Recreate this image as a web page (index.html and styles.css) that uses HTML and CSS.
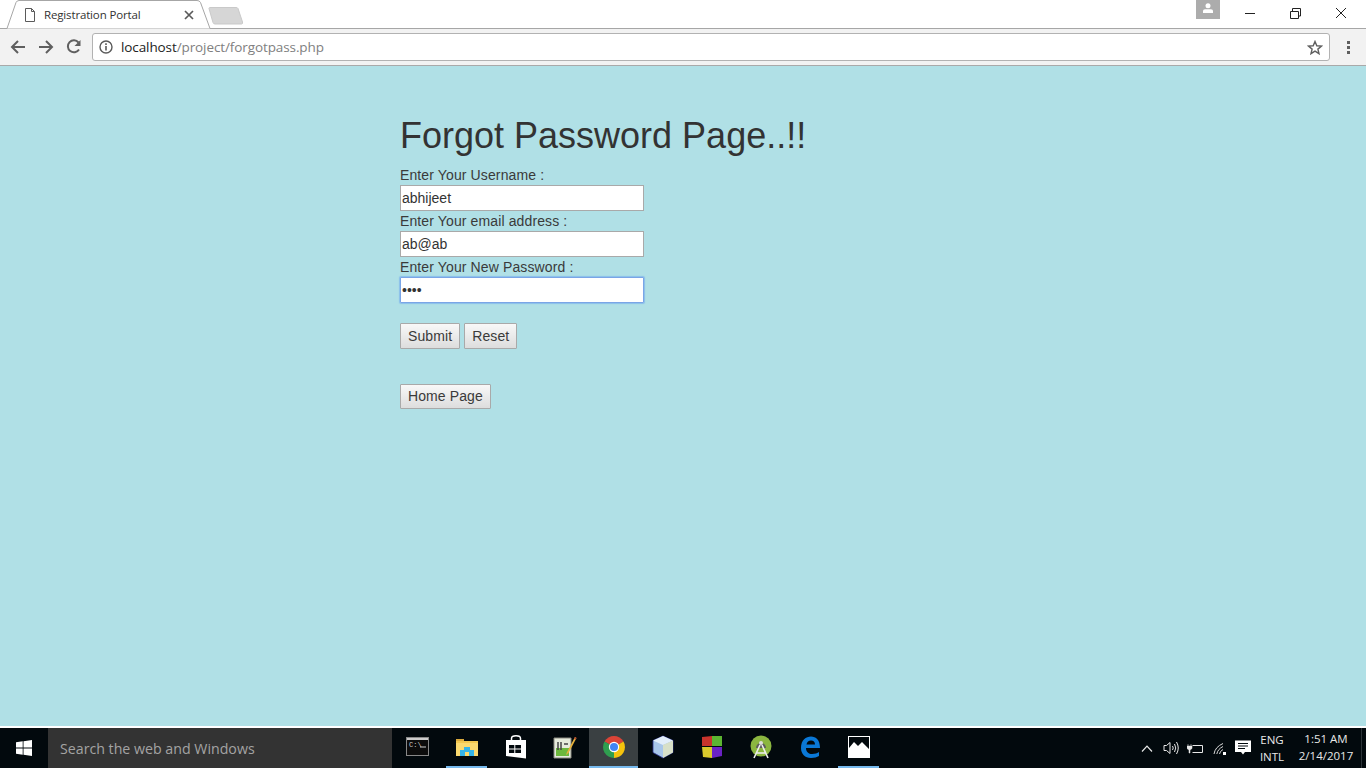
FILE: index.html
```html
<!DOCTYPE html>
<html>

<head>
    <title>Registration Portal</title>
    <link rel="stylesheet" href="styles.css">
</head>

<body>

    <div class="tabstrip">
        <div class="tab">
            <svg class="tab-shape" width="212" height="29" viewBox="0 0 212 29">
                <path d="M0 28.500H7L16 2.500Q17 .5 19 .5H197Q199.500 .5 200.500 2.500L210 28.500H212" fill="#fff" stroke="#a6a6a6"/>
            </svg>
            <svg class="tab-icon" width="12" height="14" viewBox="0 0 12 14">
                <path d="M1.500 .5H7.500L10.500 3.500V13.500H1.500ZM7.500 .5V3.500H10.500" fill="none" stroke="#5a5a5a"/>
            </svg>
            <span class="tab-title">Registration Portal</span>
            <svg class="tab-close" width="10" height="10" viewBox="0 0 10 10">
                <path d="M1 1L9 9M9 1L1 9" stroke="#5a5a5a" stroke-width="1.700"/>
            </svg>
        </div>
        <svg class="new-tab" width="36" height="18" viewBox="0 0 36 18">
            <path d="M1 1.500Q1 .5 2 .5H28Q29.500 .5 30 1.500L34.500 15Q35 17 33.500 17H7Q5.500 17 5 15.500Z" fill="#d6d6d6" stroke="#c9c9c9"/>
        </svg>
        <div class="window-controls">
            <div class="user-badge">
                <svg width="12" height="10" viewBox="0 0 12 10">
                    <circle cx="6" cy="2.700" r="2.500" fill="#fff"/>
                    <path d="M1 10V8Q1 6.500 3 6.200H9Q11 6.500 11 8V10Z" fill="#fff"/>
                </svg>
            </div>
            <svg class="win-btn" width="46" height="28" viewBox="0 0 46 28">
                <path d="M19 13.500H29" stroke="#222" fill="none"/>
            </svg>
            <svg class="win-btn" width="46" height="28" viewBox="0 0 46 28">
                <path d="M18.500 11.500H26.500V18.500H18.500ZM20.500 11V8.500H28.500V16H27" stroke="#222" fill="none"/>
            </svg>
            <svg class="win-btn" width="46" height="28" viewBox="0 0 46 28">
                <path d="M18 8L28 18M28 8L18 18" stroke="#222" fill="none"/>
            </svg>
        </div>
    </div>

    <div class="toolbar">
        <svg class="nav-icon" width="16" height="14" viewBox="0 0 16 14">
            <path d="M15 7H2M8 1L2 7L8 13" fill="none" stroke="#5f5f5f" stroke-width="2"/>
        </svg>
        <svg class="nav-icon" width="16" height="14" viewBox="0 0 16 14">
            <path d="M1 7H14M8 1L14 7L8 13" fill="none" stroke="#5f5f5f" stroke-width="2"/>
        </svg>
        <svg class="nav-icon" width="16" height="16" viewBox="0 0 16 16">
            <path d="M13 10.500A6 6 0 1 1 12.500 3.500" fill="none" stroke="#5f5f5f" stroke-width="2"/>
            <path d="M14.500 1V7H8.500Z" fill="#5f5f5f"/>
        </svg>
        <div class="omnibox">
            <svg width="14" height="14" viewBox="0 0 14 14">
                <circle cx="7" cy="7" r="6" fill="none" stroke="#5a5a5a" stroke-width="1.400"/>
                <path d="M7 6V10.500M7 3.300V5" stroke="#5a5a5a" stroke-width="1.600"/>
            </svg>
            <span class="url"><span class="url-host">localhost</span>/project/forgotpass.php</span>
            <svg class="star" width="16" height="15" viewBox="0 0 16 15">
                <path d="M8 1.500L9.800 5.800L14.500 6.100L10.900 9.100L12 13.700L8 11.200L4 13.700L5.100 9.100L1.500 6.100L6.200 5.800Z" fill="none" stroke="#5f5f5f" stroke-width="1.400"/>
            </svg>
        </div>
        <div class="menu-dots"><span></span><span></span><span></span></div>
    </div>

    <div class="page">
        <h1>Forgot Password Page..!!</h1>

        <form>
            <label for="username">Enter Your Username :</label>
            <input type="text" id="username" value="abhijeet">

            <label for="email">Enter Your email address :</label>
            <input type="text" id="email" value="ab@ab">

            <label for="newpass">Enter Your New Password :</label>
            <input type="password" id="newpass" class="focused" value="abcd">

            <div class="form-buttons">
                <button type="button">Submit</button>
                <button type="button">Reset</button>
            </div>
        </form>

        <button type="button" class="home-btn">Home Page</button>
    </div>

    <div class="taskbar">
        <div class="start">
            <svg width="16" height="16" viewBox="0 0 16 16">
                <path d="M0 2.300L6.700 1.300V7.500H0ZM7.500 1.200L16 0V7.500H7.500ZM0 8.400H6.700V14.700L0 13.700ZM7.500 8.400H16V16L7.500 14.800Z" fill="#fff"/>
            </svg>
        </div>
        <div class="search">Search the web and Windows</div>

        <div class="task-icons">
            <div class="task-item">
                <svg width="24" height="20" viewBox="0 0 24 20">
                    <rect x=".5" y=".5" width="22" height="18" fill="#0c0c0c" stroke="#888"/>
                    <rect x="1" y="1" width="21" height="2" fill="#ccc"/>
                    <text x="3" y="10" class="cmd-text">C:\</text>
                    <path d="M14 10H20" stroke="#ccc" fill="none"/>
                </svg>
            </div>
            <div class="task-item open">
                <svg width="22" height="20" viewBox="0 0 22 20">
                    <path d="M0 2H8V4H0Z" fill="#d9a93c"/>
                    <path d="M0 4H22V19H0Z" fill="#fbd96f"/>
                    <path d="M0 4H22V6H0Z" fill="#f3c850"/>
                    <path d="M4 19V13H8V10H14V13H18V19H13V15H9V19Z" fill="#35b4e8"/>
                </svg>
            </div>
            <div class="task-item">
                <svg width="22" height="24" viewBox="0 0 22 24">
                    <path d="M6.500 6V3.500Q6.500 .8 11 .8Q15.500 .8 15.500 3.500V6" fill="none" stroke="#fff" stroke-width="1.500"/>
                    <path d="M1 5H21V23.500L1 21Z" fill="#fff"/>
                    <path d="M4 10H9.300V13.500H4ZM10.300 10H16V13.500H10.300ZM4 14.500H9.300V18H4ZM10.300 14.500H16V18H10.300Z" fill="#02090d"/>
                </svg>
            </div>
            <div class="task-item">
                <svg width="24" height="24" viewBox="0 0 24 24">
                    <path d="M1 3H18V23H1Z" fill="#e6ebdc" stroke="#8a8a80"/>
                    <path d="M3 13H16V21H3Z" fill="#6cb83c"/>
                    <path d="M5 7V15M8 7V15M11 9H15" stroke="#444" stroke-width="1.500"/>
                    <path d="M22 2L14 17L13 20L15.500 18L23.500 3Z" fill="#e6b23c"/>
                    <path d="M22 2L23.500 3L22.700 4.500L21 3.700Z" fill="#b5432f"/>
                </svg>
            </div>
            <div class="task-item active">
                <svg width="22" height="22" viewBox="0 0 22 22">
                    <path d="M11 11L1.500 5.500A11 11 0 0 1 20.500 5.500Z" fill="#db4437"/>
                    <path d="M11 11L20.500 5.500A11 11 0 0 1 11 22Z" fill="#f4c20d"/>
                    <path d="M11 11L11 22A11 11 0 0 1 1.500 5.500Z" fill="#2f9e4f"/>
                    <circle cx="11" cy="11" r="5.200" fill="#fff"/>
                    <circle cx="11" cy="11" r="4" fill="#4285f4"/>
                </svg>
            </div>
            <div class="task-item">
                <svg width="22" height="24" viewBox="0 0 22 24">
                    <path d="M11 1L21 5.500V17.500L11 23L1 17.500V5.500Z" fill="#a9c7ea" stroke="#2f3590" stroke-width=".8"/>
                    <path d="M11 1L21 5.500L11 10L1 5.500Z" fill="#e2eefa"/>
                    <path d="M11 10L21 5.500V17.500L11 23Z" fill="#d8e0c8"/>
                </svg>
            </div>
            <div class="task-item">
                <svg width="22" height="24" viewBox="0 0 22 24">
                    <path d="M1 2L11 1V11H1Z" fill="#c8342c"/>
                    <path d="M11 1L21 1V11H11Z" fill="#5cb531"/>
                    <path d="M1 12H11V23L2 22Z" fill="#d9c92c"/>
                    <path d="M11 12H21V21L11 23Z" fill="#6a22c4"/>
                </svg>
            </div>
            <div class="task-item">
                <svg width="24" height="24" viewBox="0 0 24 24">
                    <circle cx="12" cy="11" r="10.500" fill="#8bb640"/>
                    <path d="M7 13A5 5 0 0 1 17 13Z" fill="#5c5c5c"/>
                    <circle cx="12" cy="8" r="2" fill="#ddd"/>
                    <path d="M11 10L5 23M13 10L19 23M7 18H17" stroke="#eee" stroke-width="1.600" fill="none"/>
                </svg>
            </div>
            <div class="task-item">
                <svg width="20" height="22" viewBox="0 0 20 22">
                    <path d="M1 12C1 4 6 .5 11 .5C16 .5 20 4 20 12H6C6 16 9 18 12 18C15 18 17.500 17 19 16V20C17 21 14.500 22 11 22C5 22 1 18 1 12ZM6.500 8.500H15C15 6 13.500 4.500 11 4.500C8.500 4.500 7 6 6.500 8.500Z" fill="#0a78d7"/>
                </svg>
            </div>
            <div class="task-item open">
                <svg width="22" height="22" viewBox="0 0 22 22">
                    <rect x=".5" y=".5" width="21" height="21" fill="#02090d" stroke="#fff"/>
                    <path d="M1 20V12L6 6L10 10L14 6L21 13V21H1Z" fill="#fff"/>
                </svg>
            </div>
        </div>

        <div class="tray">
            <svg class="tray-chevron" width="12" height="7" viewBox="0 0 12 7">
                <path d="M1 6.500L6 1.200L11 6.500" fill="none" stroke="#e8e8e8" stroke-width="1.200"/>
            </svg>
            <svg class="tray-sound" width="17" height="14" viewBox="0 0 17 14">
                <path d="M1 4.500H3.500L7 1.500V12.500L3.500 9.500H1Z" fill="none" stroke="#e8e8e8"/>
                <path d="M9.500 5Q11 7 9.500 9M11.500 3Q14 7 11.500 11M13.500 1Q17 7 13.500 13" fill="none" stroke="#e8e8e8"/>
            </svg>
            <svg class="tray-power" width="16" height="11" viewBox="0 0 16 11">
                <path d="M5.500 2.500H15.500V9.500H5.500" fill="none" stroke="#e8e8e8"/>
                <path d="M1 1V3M4 1V3M0 3H5V5.500L3 7V10H2V7L0 5.500Z" fill="#e8e8e8" stroke="#e8e8e8" stroke-width=".5"/>
            </svg>
            <svg class="tray-wifi" width="14" height="13" viewBox="0 0 14 13">
                <path d="M1 12Q2 5 10 1.500M3.800 12Q4.800 7 10 4.500M6.500 12Q7 9 10 7.500" fill="none" stroke="#d8d8d8"/>
                <rect x="10" y="10" width="3" height="3" fill="#fff"/>
            </svg>
            <svg class="tray-message" width="16" height="16" viewBox="0 0 16 16">
                <path d="M0 .5H16V12H10L8 14.500L6 12H0Z" fill="#fff"/>
                <path d="M3 3.500H13M3 6H13M3 8.500H10" stroke="#02090d"/>
            </svg>
            <div class="lang">ENG<br>INTL</div>
            <div class="clock">1:51 AM<br>2/14/2017</div>
            <div class="show-desktop"></div>
        </div>
    </div>

</body>

</html>
```

FILE: styles.css
```css
html, body {
    height: 100%;
}

body {
    margin: 0;
    display: flex;
    flex-direction: column;
    height: 768px;
    overflow: hidden;
    font-family: "Liberation Sans", Arial, sans-serif;
    font-size: 14px;
    color: #333;
    background: #fff;
}

/* browser chrome */
.tabstrip {
    display: flex;
    align-items: flex-start;
    height: 29px;
    flex: none;
    background: #fff;
    border-bottom: 1px solid #a6a6a6;
    box-sizing: border-box;
}

.tab {
    position: relative;
    display: flex;
    align-items: center;
    width: 208px;
    height: 29px;
    flex: none;
    padding-left: 24px;
    box-sizing: border-box;
    z-index: 1;
}

.tab-shape {
    position: absolute;
    left: 0;
    top: 0;
}

.tab-icon,
.tab-title,
.tab-close {
    position: relative;
}

.tab-title {
    margin-left: 8px;
    width: 140px;
    font-family: "Open Sans", sans-serif;
    font-size: 11.5px;
    letter-spacing: -.15px;
    color: #333;
}

.new-tab {
    margin: 7px 0 0 0;
    flex: none;
}

.window-controls {
    display: flex;
    align-items: flex-start;
    margin-left: auto;
    padding-right: 2px;
}

.user-badge {
    display: flex;
    justify-content: center;
    padding-top: 3px;
    width: 24px;
    height: 16px;
    margin-right: 6px;
    background: #acacac;
}

.win-btn {
    display: block;
    flex: none;
}

.toolbar {
    display: flex;
    align-items: center;
    height: 37px;
    flex: none;
    box-sizing: border-box;
    background: #f2f2f2;
    border-bottom: 1px solid #a9a9a9;
    padding-left: 10px;
}

.nav-icon {
    margin-right: 12px;
    flex: none;
}

.omnibox {
    display: flex;
    align-items: center;
    width: 1238px;
    height: 28px;
    margin-left: -2px;
    box-sizing: border-box;
    background: #fff;
    border: 1px solid #b2b2b2;
    border-radius: 3px;
    padding: 0 6px;
}

.url {
    margin-left: 8px;
    font-family: "Open Sans", sans-serif;
    font-size: 13.5px;
    letter-spacing: -.1px;
    color: #808080;
}

.url-host {
    color: #222;
}

.star {
    margin-left: auto;
}

.menu-dots {
    display: flex;
    flex-direction: column;
    gap: 2px;
    margin-left: 17px;
}

.menu-dots span {
    width: 3px;
    height: 3px;
    background: #5f5f5f;
}

/* page content */
.page {
    flex: 1;
    background: #b0e0e6;
    padding: 50px 0 0 400px;
    min-height: 0;
}

h1 {
    margin: 0 0 10px;
    font-size: 36px;
    font-weight: 500;
    line-height: 39px;
}

label {
    display: block;
    line-height: 20px;
    letter-spacing: .12px;
    color: #3a3a3a;
}

input {
    display: block;
    width: 244px;
    height: 26px;
    box-sizing: border-box;
    margin: 0;
    padding: 1px;
    border: 1px solid #a9a9a9;
    background: #fff;
    font-family: "Liberation Sans", Arial, sans-serif;
    font-size: 14px;
    color: #333;
    outline: none;
}

input.focused {
    border-color: #7aa5e6;
    box-shadow: 0 0 1px 1px rgba(90, 150, 240, .45);
    border-radius: 1px;
}

button {
    display: block;
    height: 26px;
    margin: 0;
    padding: 0 7px;
    border: 1px solid #a9a9a9;
    border-radius: 1px;
    background: linear-gradient(#f8f8f8, #dddddd);
    font-family: "Liberation Sans", Arial, sans-serif;
    font-size: 14px;
    letter-spacing: .1px;
    color: #3a3a3a;
}

.form-buttons {
    display: flex;
    gap: 4px;
    margin-top: 20px;
}

.home-btn {
    margin-top: 35px;
    height: 25px;
    padding-bottom: 2px;
}

/* windows taskbar */
.taskbar {
    display: flex;
    align-items: stretch;
    height: 42px;
    flex: none;
    box-sizing: border-box;
    border-top: 2px solid #fff;
    background: #02090d;
    color: #e8e8e8;
}

.start {
    display: flex;
    align-items: center;
    justify-content: center;
    width: 48px;
    flex: none;
}

.search {
    display: flex;
    align-items: center;
    width: 344px;
    flex: none;
    box-sizing: border-box;
    padding-left: 12px;
    background: #333;
    font-family: "Open Sans", sans-serif;
    font-size: 14.2px;
    color: #a3a3a3;
}

.task-icons {
    display: flex;
    padding-left: 1px;
}

.task-item {
    display: flex;
    align-items: center;
    justify-content: center;
    width: 49px;
    flex: none;
    box-sizing: border-box;
    border-bottom: 2px solid transparent;
}

.task-item.open {
    border-image: linear-gradient(90deg, transparent 9%, #76b9ed 9%, #76b9ed 91%, transparent 91%) 1;
}

.task-item.active {
    background: #3a4042;
    border-bottom-color: #76b9ed;
}

.cmd-text {
    font-family: "Liberation Mono", monospace;
    font-size: 7px;
    fill: #ccc;
}

.tray {
    display: flex;
    align-items: center;
    margin-left: auto;
    padding-right: 4px;
    font-family: "Open Sans", sans-serif;
    font-size: 11.5px;
    line-height: 17px;
}

.tray-sound {
    margin-left: 10px;
}

.tray-power {
    margin-left: 7px;
}

.tray-wifi {
    margin-left: 10px;
}

.tray-message {
    margin-left: 8px;
}

.lang {
    margin-left: 5px;
    width: 32px;
    text-align: center;
}

.clock {
    width: 62px;
    margin-left: 7px;
    padding: 0 4px 2px 0;
    text-align: center;
}

.show-desktop {
    width: 1px;
    align-self: stretch;
    background: #2c3438;
}
```
